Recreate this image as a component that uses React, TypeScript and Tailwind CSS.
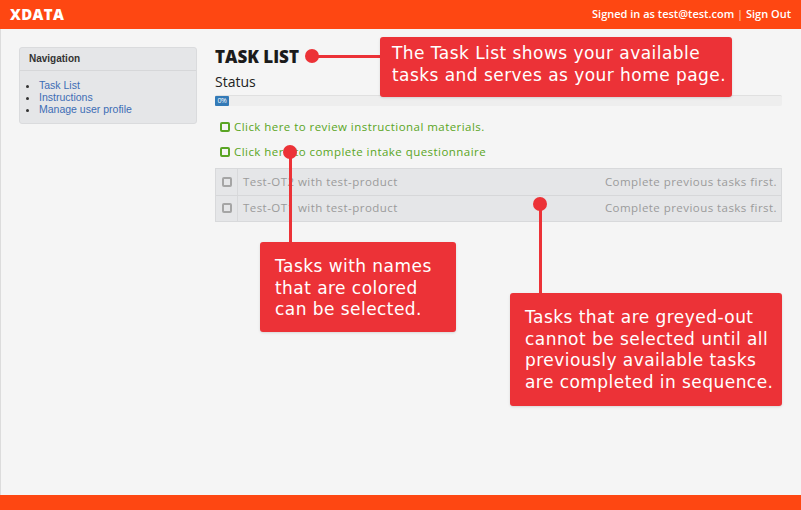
import React from 'react';

const Callout: React.FC<{ className: string; children: React.ReactNode }> = ({ className, children }) => (
  <div
    className={`absolute bg-[#ec3237] text-white rounded-[3px] shadow-sm text-[17px] leading-[21.5px] tracking-[0.45px] ${className}`}
    style={{ fontFamily: '"DejaVu Sans", "Open Sans", sans-serif' }}
  >
    {children}
  </div>
);

const Box: React.FC<{ color: string }> = ({ color }) => (
  <span className={`inline-block w-[10px] h-[10px] rounded-[2px] border-2 ${color}`}></span>
);

const tasks = [
  { name: 'Test-OT2 with test-product' },
  { name: 'Test-OT1 with test-product' },
];

export default function App() {
  return (
    <div className="relative h-[510px] w-[801px] flex flex-col bg-[#f5f5f5] overflow-hidden" style={{ fontFamily: '"Open Sans", sans-serif' }}>
      {/* Header */}
      <div className="h-[29px] bg-[#fe4712] flex items-center justify-between px-[10px] text-white">
        <span className="text-[15px] font-extrabold tracking-wide">XDATA</span>
        <span className="text-[11px] font-semibold">
          Signed in as test@test.com <span className="text-[#ffb59a]">|</span> Sign Out
        </span>
      </div>

      {/* Body */}
      <div className="flex-1 flex gap-[18px] pl-[18px] pr-[19px] pt-[18px] border-l border-[#dcdcdc]">
        <div
          className="w-[178px] self-start bg-[#e5e6e8] rounded-[3px] border border-[#dadbdd]"
          style={{ fontFamily: '"Liberation Sans", Arial, sans-serif' }}
        >
          <div className="px-[9px] py-[5px] text-[10px] leading-[12px] font-bold text-[#333] border-b border-[#d6d7d9]">Navigation</div>
          <ul className="list-disc pl-[19px] pt-[8px] pb-[8px] text-[10.5px] leading-[12px] text-[#3d6db5] marker:text-[#333]">
            <li>Task List</li>
            <li>Instructions</li>
            <li>Manage user profile</li>
          </ul>
        </div>

        <div className="flex-1">
          <h1 className="text-[17px] font-extrabold text-[#1b1b1b] leading-[20px]">TASK LIST</h1>
          <div className="mt-[6px] text-[14px] text-[#222] leading-[18px]">Status</div>
          <div className="mt-[4px] h-[11px] bg-[#eeeeee] border-t border-[#e0e0e0] rounded-[2px]">
            <div className="w-[14px] h-[10px] bg-[#337ab7] rounded-[1px] text-white text-[7px] leading-[10px] text-center tracking-[-0.5px]">0%</div>
          </div>

          <div className="mt-[12px] pl-[5px] flex flex-col gap-[8px] text-[11.5px] tracking-[0.45px] text-[#5aa524]">
            <div className="flex items-center gap-[4px]"><Box color="border-[#5aa524]" />Click here to review instructional materials.</div>
            <div className="flex items-center gap-[4px]"><Box color="border-[#5aa524]" />Click here to complete intake questionnaire</div>
          </div>

          <div className="mt-[7px] bg-[#e5e6e8] border border-[#d8d9db] text-[11.5px] tracking-[0.45px] text-[#9b9b9b]">
            {tasks.map((t, i) => (
              <div key={t.name} className={`flex h-[26px] items-center ${i > 0 ? 'border-t border-[#d6d7d9]' : ''}`}>
                <div className="w-[22px] h-full flex items-center justify-center border-r border-[#d8d9db]">
                  <Box color="border-[#a5a5a5]" />
                </div>
                <div className="pl-[5px] flex-1">{t.name}</div>
                <div className="pr-[4px]">Complete previous tasks first.</div>
              </div>
            ))}
          </div>
        </div>
      </div>

      {/* Footer */}
      <div className="h-[15px] bg-[#fe4712]"></div>

      {/* Annotations */}
      <div className="absolute left-[305px] top-[49px] w-[14px] h-[14px] rounded-full bg-[#ec3237]"></div>
      <div className="absolute left-[312px] top-[55px] w-[70px] h-[3px] bg-[#ec3237]"></div>
      <Callout className="left-[380px] top-[37px] w-[352px] h-[60px] pl-[12px] pt-[6px]">
        The Task List shows your available<br />tasks and serves as your home page.
      </Callout>

      <div className="absolute left-[283px] top-[145px] w-[14px] h-[14px] rounded-full bg-[#ec3237]"></div>
      <div className="absolute left-[289px] top-[152px] w-[3px] h-[92px] bg-[#ec3237]"></div>
      <Callout className="left-[260px] top-[242px] w-[196px] h-[90px] pl-[15px] pt-[14px]">
        Tasks with names<br />that are colored<br />can be selected.
      </Callout>

      <div className="absolute left-[533px] top-[197px] w-[14px] h-[14px] rounded-full bg-[#ec3237]"></div>
      <div className="absolute left-[539px] top-[204px] w-[3px] h-[90px] bg-[#ec3237]"></div>
      <Callout className="left-[510px] top-[293px] w-[272px] h-[113px] pl-[15px] pt-[14px]">
        Tasks that are greyed-out<br />cannot be selected until all<br />previously available tasks<br />are completed in sequence.
      </Callout>
    </div>
  );
}
